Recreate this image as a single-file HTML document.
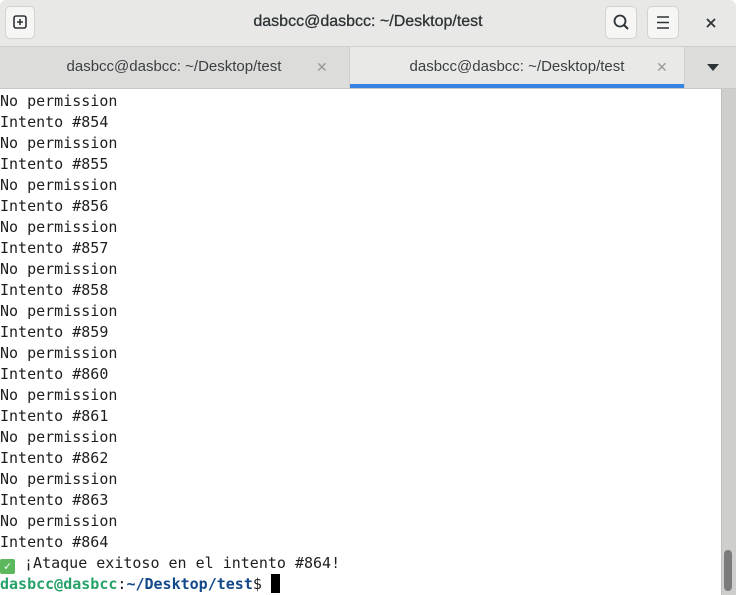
<!DOCTYPE html><html><head><style>
body{margin:0;width:736px;height:595px;overflow:hidden;background:#fff;font-family:"Liberation Sans",sans-serif;position:relative}
.tb{position:absolute;left:0;top:0;width:736px;height:46px;background:#e8e8e7;border-bottom:1px solid #cfcfcd;border-radius:6px 6px 0 0}
.title{position:absolute;top:13px;left:0;width:736px;text-align:center;font-size:16px;color:#2e3436;-webkit-text-stroke:0.3px #2e3436}
.btn{position:absolute;top:6px;width:28px;height:31px;background:#f6f6f5;border:1px solid #d2d2d0;border-radius:5px}
.tabs{position:absolute;left:0;top:47px;width:736px;height:41px;background:#dcdcda;border-bottom:1px solid #c8c8c6}
.tab{position:absolute;top:0;height:41px;font-size:15px;color:#3b3f40;line-height:40px;text-align:center}
.x{position:absolute;font-size:14px;color:#999;top:0}
pre{position:absolute;left:0;top:91px;margin:0;font-family:"DejaVu Sans Mono","Liberation Mono",monospace;font-size:15px;line-height:21px;color:#1e1e1e}
.sb{position:absolute;left:721px;top:89px;width:15px;height:506px;background:#cececc;border-left:1px solid #bdbdbb}
.th{position:absolute;left:724px;top:550px;width:8px;height:41px;background:#7b7b7b;border-radius:4px}
</style></head><body>
<div class="tb">
<div class="btn" style="left:5px"><svg width="28" height="31"><rect x="8" y="9" width="12" height="12" rx="2" fill="none" stroke="#2e3436" stroke-width="1.6"/><path d="M14 12v6M11 15h6" stroke="#2e3436" stroke-width="1.6"/></svg></div>
<div class="title">dasbcc@dasbcc: ~/Desktop/test</div>
<div class="btn" style="left:605px;width:30px"><svg width="30" height="31"><circle cx="14" cy="14" r="5.5" fill="none" stroke="#2e3436" stroke-width="1.8"/><path d="M18 18l4 4" stroke="#2e3436" stroke-width="2"/></svg></div>
<div class="btn" style="left:647px;width:30px"><svg width="30" height="31"><path d="M9 10h12M9 15.5h12M9 21h12" stroke="#2e3436" stroke-width="1.6"/></svg></div>
<svg style="position:absolute;left:704px;top:16px" width="14" height="14"><path d="M3 3l8 8M11 3l-8 8" stroke="#2e3436" stroke-width="1.8"/></svg>
</div>
<div class="tabs">
<div class="tab" style="left:0;width:348px">dasbcc@dasbcc: ~/Desktop/test<span class="x" style="left:316px">✕</span></div>
<div class="tab" style="left:349px;width:334px;background:#e9e9e8;border-left:1px solid #cfcfcd;border-right:1px solid #cfcfcd">dasbcc@dasbcc: ~/Desktop/test<span class="x" style="left:306px">✕</span><div style="position:absolute;left:0;bottom:0;width:334px;height:4px;background:#3584e4"></div></div>
<svg style="position:absolute;left:706px;top:16px" width="14" height="10"><path d="M1 1h12l-6 7z" fill="#2e3436"/></svg>
</div>
<pre>No permission
Intento #854
No permission
Intento #855
No permission
Intento #856
No permission
Intento #857
No permission
Intento #858
No permission
Intento #859
No permission
Intento #860
No permission
Intento #861
No permission
Intento #862
No permission
Intento #863
No permission
Intento #864
<span style="display:inline-block;width:15px;height:15px;background:#5cb85c;border-radius:2px;color:#fff;font-size:12px;line-height:15px;text-align:center;vertical-align:-2px">✓</span> ¡Ataque exitoso en el intento #864!
<b style="color:#26a269">dasbcc@dasbcc</b>:<b style="color:#12488b">~/Desktop/test</b>$ <span style="display:inline-block;width:9px;height:19px;background:#000;vertical-align:-4px"></span></pre>
<div class="sb"></div><div class="th"></div>
</body></html>
